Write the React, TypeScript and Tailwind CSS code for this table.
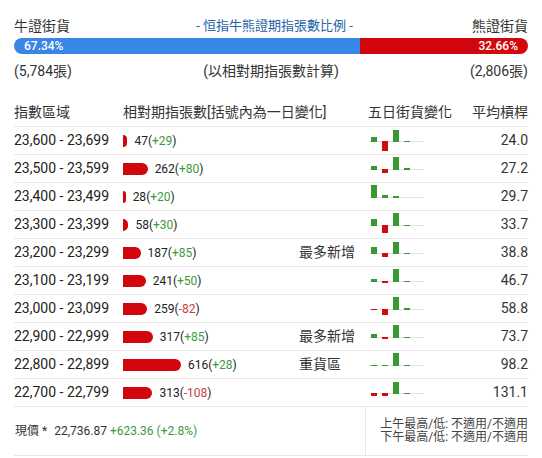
import React from "react";

// 每行：指數區域 / 相對期指張數 / 一日變化 / 標記 / 平均槓桿 / 五日街貨變化(px)
const rows = [
  { range: "23,600 - 23,699", qty: 47, chg: 29, tag: "", lev: "24.0", five: [5, -10, 12, 1] },
  { range: "23,500 - 23,599", qty: 262, chg: 80, tag: "", lev: "27.2", five: [4, -4, 13, 2] },
  { range: "23,400 - 23,499", qty: 28, chg: 20, tag: "", lev: "29.7", five: [13, 3, 2, 0] },
  { range: "23,300 - 23,399", qty: 58, chg: 30, tag: "", lev: "33.7", five: [7, -8, 13, 1] },
  { range: "23,200 - 23,299", qty: 187, chg: 85, tag: "最多新增", lev: "38.8", five: [7, -4, 12, 1] },
  { range: "23,100 - 23,199", qty: 241, chg: 50, tag: "", lev: "46.7", five: [3, -2, 13, 1] },
  { range: "23,000 - 23,099", qty: 259, chg: -82, tag: "", lev: "58.8", five: [-1, -6, 13, 2] },
  { range: "22,900 - 22,999", qty: 317, chg: 85, tag: "最多新增", lev: "73.7", five: [4, -2, 13, 1] },
  { range: "22,800 - 22,899", qty: 616, chg: 28, tag: "重貨區", lev: "98.2", five: [1, 1, 13, 1] },
  { range: "22,700 - 22,799", qty: 313, chg: -108, tag: "", lev: "131.1", five: [-3, -3, 12, 1] },
];

function FiveDay({ data }: { data: number[] }) {
  return (
    <svg width="57" height="27" viewBox="0 0 57 27">
      <rect x="1" y="14" width="55" height="1" fill="#e3e3e3" />
      {data.map((h, i) =>
        h === 0 ? null : h > 0 ? (
          <rect key={i} x={3 + i * 11} y={15 - h} width="6" height={h} fill="#369a30" />
        ) : (
          <rect key={i} x={3 + i * 11} y={14} width="6" height={-h} fill="#d20a12" />
        )
      )}
    </svg>
  );
}

export default function App() {
  return (
    <div className="h-[458px] w-[542px] bg-white px-[14px] pt-[16px] font-['Roboto','Noto_Sans_CJK_TC',sans-serif] text-[#222]">
      {/* 標題 */}
      <div className="flex h-[20px] items-center justify-between text-[14px] text-[#333]">
        <span>牛證街貨</span>
        <span className="pl-[7px] text-[13px] text-[#2563a6]">- 恒指牛熊證期指張數比例 -</span>
        <span>熊證街貨</span>
      </div>

      <div className="mt-[2px] flex h-[16px] overflow-hidden rounded-full text-[12px] font-medium leading-[16px] text-white">
        <div className="w-[67.34%] bg-[#3a86e6] pl-[10px]">67.34%</div>
        <div className="flex-1 bg-[#d2070e] pr-[10px] text-right">32.66%</div>
      </div>

      <div className="mt-[7px] flex h-[20px] items-center justify-between text-[14px] text-[#333]">
        <span>(5,784張)</span>
        <span>(以相對期指張數計算)</span>
        <span>(2,806張)</span>
      </div>

      {/* 表頭 */}
      <div className="mt-[18px] flex h-[28px] items-center border-b border-[#e8e8e8] text-[14px] text-[#333]">
        <div className="w-[109px]">指數區域</div>
        <div className="w-[245px]">相對期指張數[括號內為一日變化]</div>
        <div>五日街貨變化</div>
        <div className="flex-1 text-right">平均槓桿</div>
      </div>

      {rows.map((r) => (
        <div key={r.range} className="flex h-[28px] items-center border-b border-[#e8e8e8]">
          <div className="w-[109px] text-[14px]">{r.range}</div>
          <div className="flex w-[176px] items-center">
            <div className="h-[12px] rounded-r-full bg-[#d2070e]" style={{ width: r.qty * 0.094 }} />
            <span className="ml-[7px] text-[12px]">
              {r.qty}(
              <span className={r.chg > 0 ? "text-[#3c9a3c]" : "text-[#cc3d3d]"}>
                {r.chg > 0 ? "+" + r.chg : r.chg}
              </span>
              )
            </span>
          </div>
          <div className="w-[69px] text-[14px] text-[#333]">{r.tag}</div>
          <div className="flex w-[62px] items-center">
            <FiveDay data={r.five} />
          </div>
          <div className="flex-1 text-right text-[14px] text-[#333]">{r.lev}</div>
        </div>
      ))}

      {/* 現價 */}
      <div className="flex h-[49px] border-b border-[#e8e8e8]">
        <div className="flex w-[351px] items-center pl-[1px] text-[12px] text-[#333]">
          <span>現價 *</span>
          <span className="ml-[7px]">22,736.87</span>
          <span className="ml-[3px] text-[#3c9a3c]">+623.36 (+2.8%)</span>
        </div>
        <div className="flex flex-1 flex-col items-end justify-center border-l border-[#e8e8e8] text-[12px] leading-[13px] text-[#444]">
          <div>上午最高/低: 不適用/不適用</div>
          <div>下午最高/低: 不適用/不適用</div>
        </div>
      </div>
    </div>
  );
}
